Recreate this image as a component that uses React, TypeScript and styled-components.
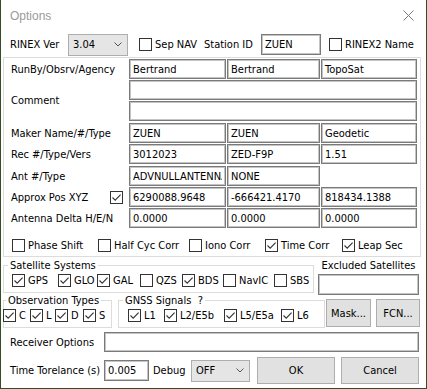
import React from "react";
import styled, { createGlobalStyle } from "styled-components";

const Global = createGlobalStyle`
  html, body { margin: 0; padding: 0; background: #3b4a26; }
  body { font-family: "DejaVu Sans Condensed", "Liberation Sans", Arial, sans-serif; font-size: 11px; color: #000; }
  * { box-sizing: border-box; }
`;

const Desktop = styled.div`
  width: 427px;
  height: 389px;
  padding: 0 1px 0 1px;
  background: #3b4a26;
  overflow: hidden;
`;

const Window = styled.div`
  width: 425px;
  height: 388px;
  background: #fff;
  display: flex;
  flex-direction: column;
`;

const TitleBar = styled.div`
  height: 31px;
  flex: none;
  display: flex;
  align-items: center;
  justify-content: space-between;
  padding: 0 12px 0 9px;
`;

const Title = styled.span`
  font-family: "Liberation Sans", Arial, sans-serif;
  font-size: 12px;
  color: #9a9a9a;
`;

const TopRow = styled.div`
  margin-top: 2px;
  height: 23px;
  flex: none;
  display: flex;
  align-items: center;
  padding-left: 9px;
`;

const Text = styled.span<{ $w?: number; $ml?: number }>`
  white-space: nowrap;
  ${(p) => (p.$w ? `width:${p.$w}px; flex: none;` : "")}
  ${(p) => (p.$ml ? `margin-left:${p.$ml}px;` : "")}
`;

const Select = styled.div<{ $w: number; $ml?: number }>`
  width: ${(p) => p.$w}px;
  flex: none;
  height: 22px;
  margin-left: ${(p) => p.$ml ?? 0}px;
  background: #e5e5e5;
  border: 1px solid #adadad;
  display: flex;
  align-items: center;
  justify-content: space-between;
  padding: 0 5px 0 4px;
`;

const Input = styled.div<{ $w: number; $h?: number; $ml?: number }>`
  width: ${(p) => p.$w}px;
  flex: none;
  height: ${(p) => p.$h ?? 20}px;
  margin-left: ${(p) => p.$ml ?? 0}px;
  border: 1px solid #7a7a7a;
  box-shadow: inset 0 0 0 1px #c4c4c4;
  background: #fff;
  display: flex;
  align-items: center;
  padding: 0 3px;
  white-space: nowrap;
  overflow: hidden;
`;

const Clip = styled.span`
  overflow: hidden;
  white-space: nowrap;
  min-width: 0;
`;

const Panel = styled.div`
  margin: 1px 0 0 2px;
  width: 418px;
  flex: none;
  border: 1px solid #dcdcdc;
  padding: 1px 2px 0 7px;
  display: flex;
  flex-direction: column;
`;

const FormRow = styled.div<{ $h: number }>`
  display: flex;
  flex: none;
  height: ${(p) => p.$h}px;
  align-items: flex-start;
`;

const RowLabel = styled.div<{ $h?: number }>`
  width: 118px;
  flex: none;
  height: ${(p) => p.$h ?? 20}px;
  display: flex;
  align-items: center;
  justify-content: space-between;
  padding-right: 6px;
  white-space: nowrap;
`;

const Fields = styled.div`
  display: flex;
  gap: 1px;
`;

const Stack = styled.div`
  display: flex;
  flex-direction: column;
  gap: 1px;
`;

const CheckGrid = styled.div<{ $cols: string; $ml?: number }>`
  display: grid;
  grid-template-columns: ${(p) => p.$cols};
  align-items: center;
  margin-left: ${(p) => p.$ml ?? 0}px;
`;

const OptionsRow = styled(CheckGrid)`
  padding: 9px 0 4px 0;
`;

const CheckWrap = styled.label<{ $w?: number; $ml?: number }>`
  display: inline-flex;
  align-items: center;
  gap: 3px;
  white-space: nowrap;
  ${(p) => (p.$w ? `width:${p.$w}px; flex: none;` : "")}
  ${(p) => (p.$ml ? `margin-left:${p.$ml}px;` : "")}
`;

const Box = styled.span`
  width: 13px;
  height: 13px;
  flex: none;
  border: 1px solid #333;
  background: #fff;
  display: inline-flex;
  align-items: center;
  justify-content: center;
`;

const SectionRow = styled.div<{ $h: number; $mt: number }>`
  display: flex;
  flex: none;
  align-items: flex-start;
  height: ${(p) => p.$h}px;
  margin-top: ${(p) => p.$mt}px;
  padding-left: 2px;
`;

const Group = styled.fieldset<{ $w: number; $pl: number; $ml?: number }>`
  margin: 0 0 0 ${(p) => p.$ml ?? 0}px;
  width: ${(p) => p.$w}px;
  flex: none;
  height: 34px;
  min-width: 0;
  border: 1px solid #dcdcdc;
  padding: 2px 0 0 ${(p) => p.$pl}px;
`;

const Legend = styled.legend<{ $ml: number }>`
  padding: 0 2px;
  margin-left: ${(p) => p.$ml}px;
  line-height: 13px;
  white-space: pre;
`;

const Excluded = styled.div`
  margin-left: 4px;
  width: 101px;
  flex: none;
  display: flex;
  flex-direction: column;
  align-items: center;
  gap: 2px;
  line-height: 13px;
  white-space: nowrap;
`;

const Button = styled.div<{ $w: number; $h: number; $ml: number }>`
  width: ${(p) => p.$w}px;
  flex: none;
  height: ${(p) => p.$h}px;
  margin-left: ${(p) => p.$ml}px;
  background: #e1e1e1;
  border: 1px solid #adadad;
  display: flex;
  align-items: center;
  justify-content: center;
  white-space: nowrap;
`;

const ButtonRow = styled.div`
  display: flex;
  align-self: stretch;
  align-items: flex-end;
  padding-bottom: 1px;
`;

const LineRow = styled.div<{ $h: number; $mt: number }>`
  display: flex;
  flex: none;
  align-items: center;
  height: ${(p) => p.$h}px;
  margin-top: ${(p) => p.$mt}px;
  padding-left: 9px;
`;

const CheckMark = () => (
  <svg width="11" height="11" viewBox="0 0 11 11">
    <path d="M1.5 5.5 L4.2 8.2 L9.6 2.6" fill="none" stroke="#333" strokeWidth="1.1" />
  </svg>
);

const Check = ({ label, checked, w, ml }: { label?: string; checked?: boolean; w?: number; ml?: number }) => (
  <CheckWrap $w={w} $ml={ml}>
    <Box>{checked && <CheckMark />}</Box>
    {label && <span>{label}</span>}
  </CheckWrap>
);

const Chevron = () => (
  <svg width="8" height="5" viewBox="0 0 8 5">
    <path d="M0.5 0.5 L4 4 L7.5 0.5" fill="none" stroke="#555" strokeWidth="1" />
  </svg>
);

const CloseIcon = () => (
  <svg width="11" height="11" viewBox="0 0 11 11">
    <path d="M0.5 0.5 L10.5 10.5 M10.5 0.5 L0.5 10.5" stroke="#7a7a7a" strokeWidth="1" />
  </svg>
);

export default function App() {
  return (
    <>
      <Global />
      <Desktop>
        <Window>
          <TitleBar>
            <Title>Options</Title>
            <CloseIcon />
          </TitleBar>

          <TopRow>
            <Text $w={58}>RINEX Ver</Text>
            <Select $w={60}>
              <span>3.04</span>
              <Chevron />
            </Select>
            <Check label="Sep NAV" w={65} ml={11} />
            <Text $w={57}>Station ID</Text>
            <Input $w={60} $h={21}>ZUEN</Input>
            <Check label="RINEX2 Name" ml={8} />
          </TopRow>

          <Panel>
            <FormRow $h={21}>
              <RowLabel>RunBy/Obsrv/Agency</RowLabel>
              <Fields>
                <Input $w={97}>Bertrand</Input>
                <Input $w={93}>Bertrand</Input>
                <Input $w={96}>TopoSat</Input>
              </Fields>
            </FormRow>
            <FormRow $h={43}>
              <RowLabel $h={41}>Comment</RowLabel>
              <Stack>
                <Input $w={288} />
                <Input $w={288} />
              </Stack>
            </FormRow>
            <FormRow $h={21}>
              <RowLabel>Maker Name/#/Type</RowLabel>
              <Fields>
                <Input $w={97}>ZUEN</Input>
                <Input $w={93}>ZUEN</Input>
                <Input $w={96}>Geodetic</Input>
              </Fields>
            </FormRow>
            <FormRow $h={22}>
              <RowLabel>Rec #/Type/Vers</RowLabel>
              <Fields>
                <Input $w={97}>3012023</Input>
                <Input $w={93}>ZED-F9P</Input>
                <Input $w={96}>1.51</Input>
              </Fields>
            </FormRow>
            <FormRow $h={21}>
              <RowLabel>Ant #/Type</RowLabel>
              <Fields>
                <Input $w={97}>
                  <Clip>ADVNULLANTENNA</Clip>
                </Input>
                <Input $w={93}>NONE</Input>
              </Fields>
            </FormRow>
            <FormRow $h={21}>
              <RowLabel>
                <span>Approx Pos XYZ</span>
                <Box>
                  <CheckMark />
                </Box>
              </RowLabel>
              <Fields>
                <Input $w={97}>6290088.9648</Input>
                <Input $w={93}>-666421.4170</Input>
                <Input $w={96}>818434.1388</Input>
              </Fields>
            </FormRow>
            <FormRow $h={22}>
              <RowLabel>Antenna Delta H/E/N</RowLabel>
              <Fields>
                <Input $w={97}>0.0000</Input>
                <Input $w={93}>0.0000</Input>
                <Input $w={96}>0.0000</Input>
              </Fields>
            </FormRow>
            <OptionsRow $cols="86px 91px 76px 77px auto" $ml={1}>
              <Check label="Phase Shift" />
              <Check label="Half Cyc Corr" />
              <Check label="Iono Corr" />
              <Check label="Time Corr" checked />
              <Check label="Leap Sec" checked />
            </OptionsRow>
          </Panel>

          <SectionRow $h={35} $mt={2}>
            <Group $w={311} $pl={8}>
              <Legend $ml={-4}>Satellite Systems</Legend>
              <CheckGrid $cols="46px 39px 43px 42px 41px 51px auto">
                <Check label="GPS" checked />
                <Check label="GLO" checked />
                <Check label="GAL" checked />
                <Check label="QZS" />
                <Check label="BDS" checked />
                <Check label="NavIC" />
                <Check label="SBS" />
              </CheckGrid>
            </Group>
            <Excluded>
              <span>Excluded Satellites</span>
              <Input $w={101} $h={21} />
            </Excluded>
          </SectionRow>

          <SectionRow $h={34} $mt={0}>
            <Group $w={109} $pl={0}>
              <Legend $ml={2}>Observation Types</Legend>
              <CheckGrid $cols="27px 25px 28px auto" $ml={-1}>
                <Check label="C" checked />
                <Check label="L" checked />
                <Check label="D" checked />
                <Check label="S" checked />
              </CheckGrid>
            </Group>
            <Group $w={207} $pl={9} $ml={6}>
              <Legend $ml={-5}>{"GNSS Signals  ?"}</Legend>
              <CheckGrid $cols="36px 60px 57px auto">
                <Check label="L1" checked />
                <Check label="L2/E5b" checked />
                <Check label="L5/E5a" checked />
                <Check label="L6" checked />
              </CheckGrid>
            </Group>
            <ButtonRow>
              <Button $w={45} $h={28} $ml={1}>Mask...</Button>
              <Button $w={44} $h={28} $ml={5}>FCN...</Button>
            </ButtonRow>
          </SectionRow>

          <LineRow $h={20} $mt={4}>
            <Text $w={94}>Receiver Options</Text>
            <Input $w={315} />
          </LineRow>

          <LineRow $h={27} $mt={5}>
            <Text $w={94}>Time Torelance (s)</Text>
            <Input $w={45} $h={21}>0.005</Input>
            <Text $w={38} $ml={4}>Debug</Text>
            <Select $w={59}>
              <span>OFF</span>
              <Chevron />
            </Select>
            <Button $w={78} $h={27} $ml={7}>OK</Button>
            <Button $w={78} $h={27} $ml={6}>Cancel</Button>
          </LineRow>
        </Window>
      </Desktop>
    </>
  );
}
